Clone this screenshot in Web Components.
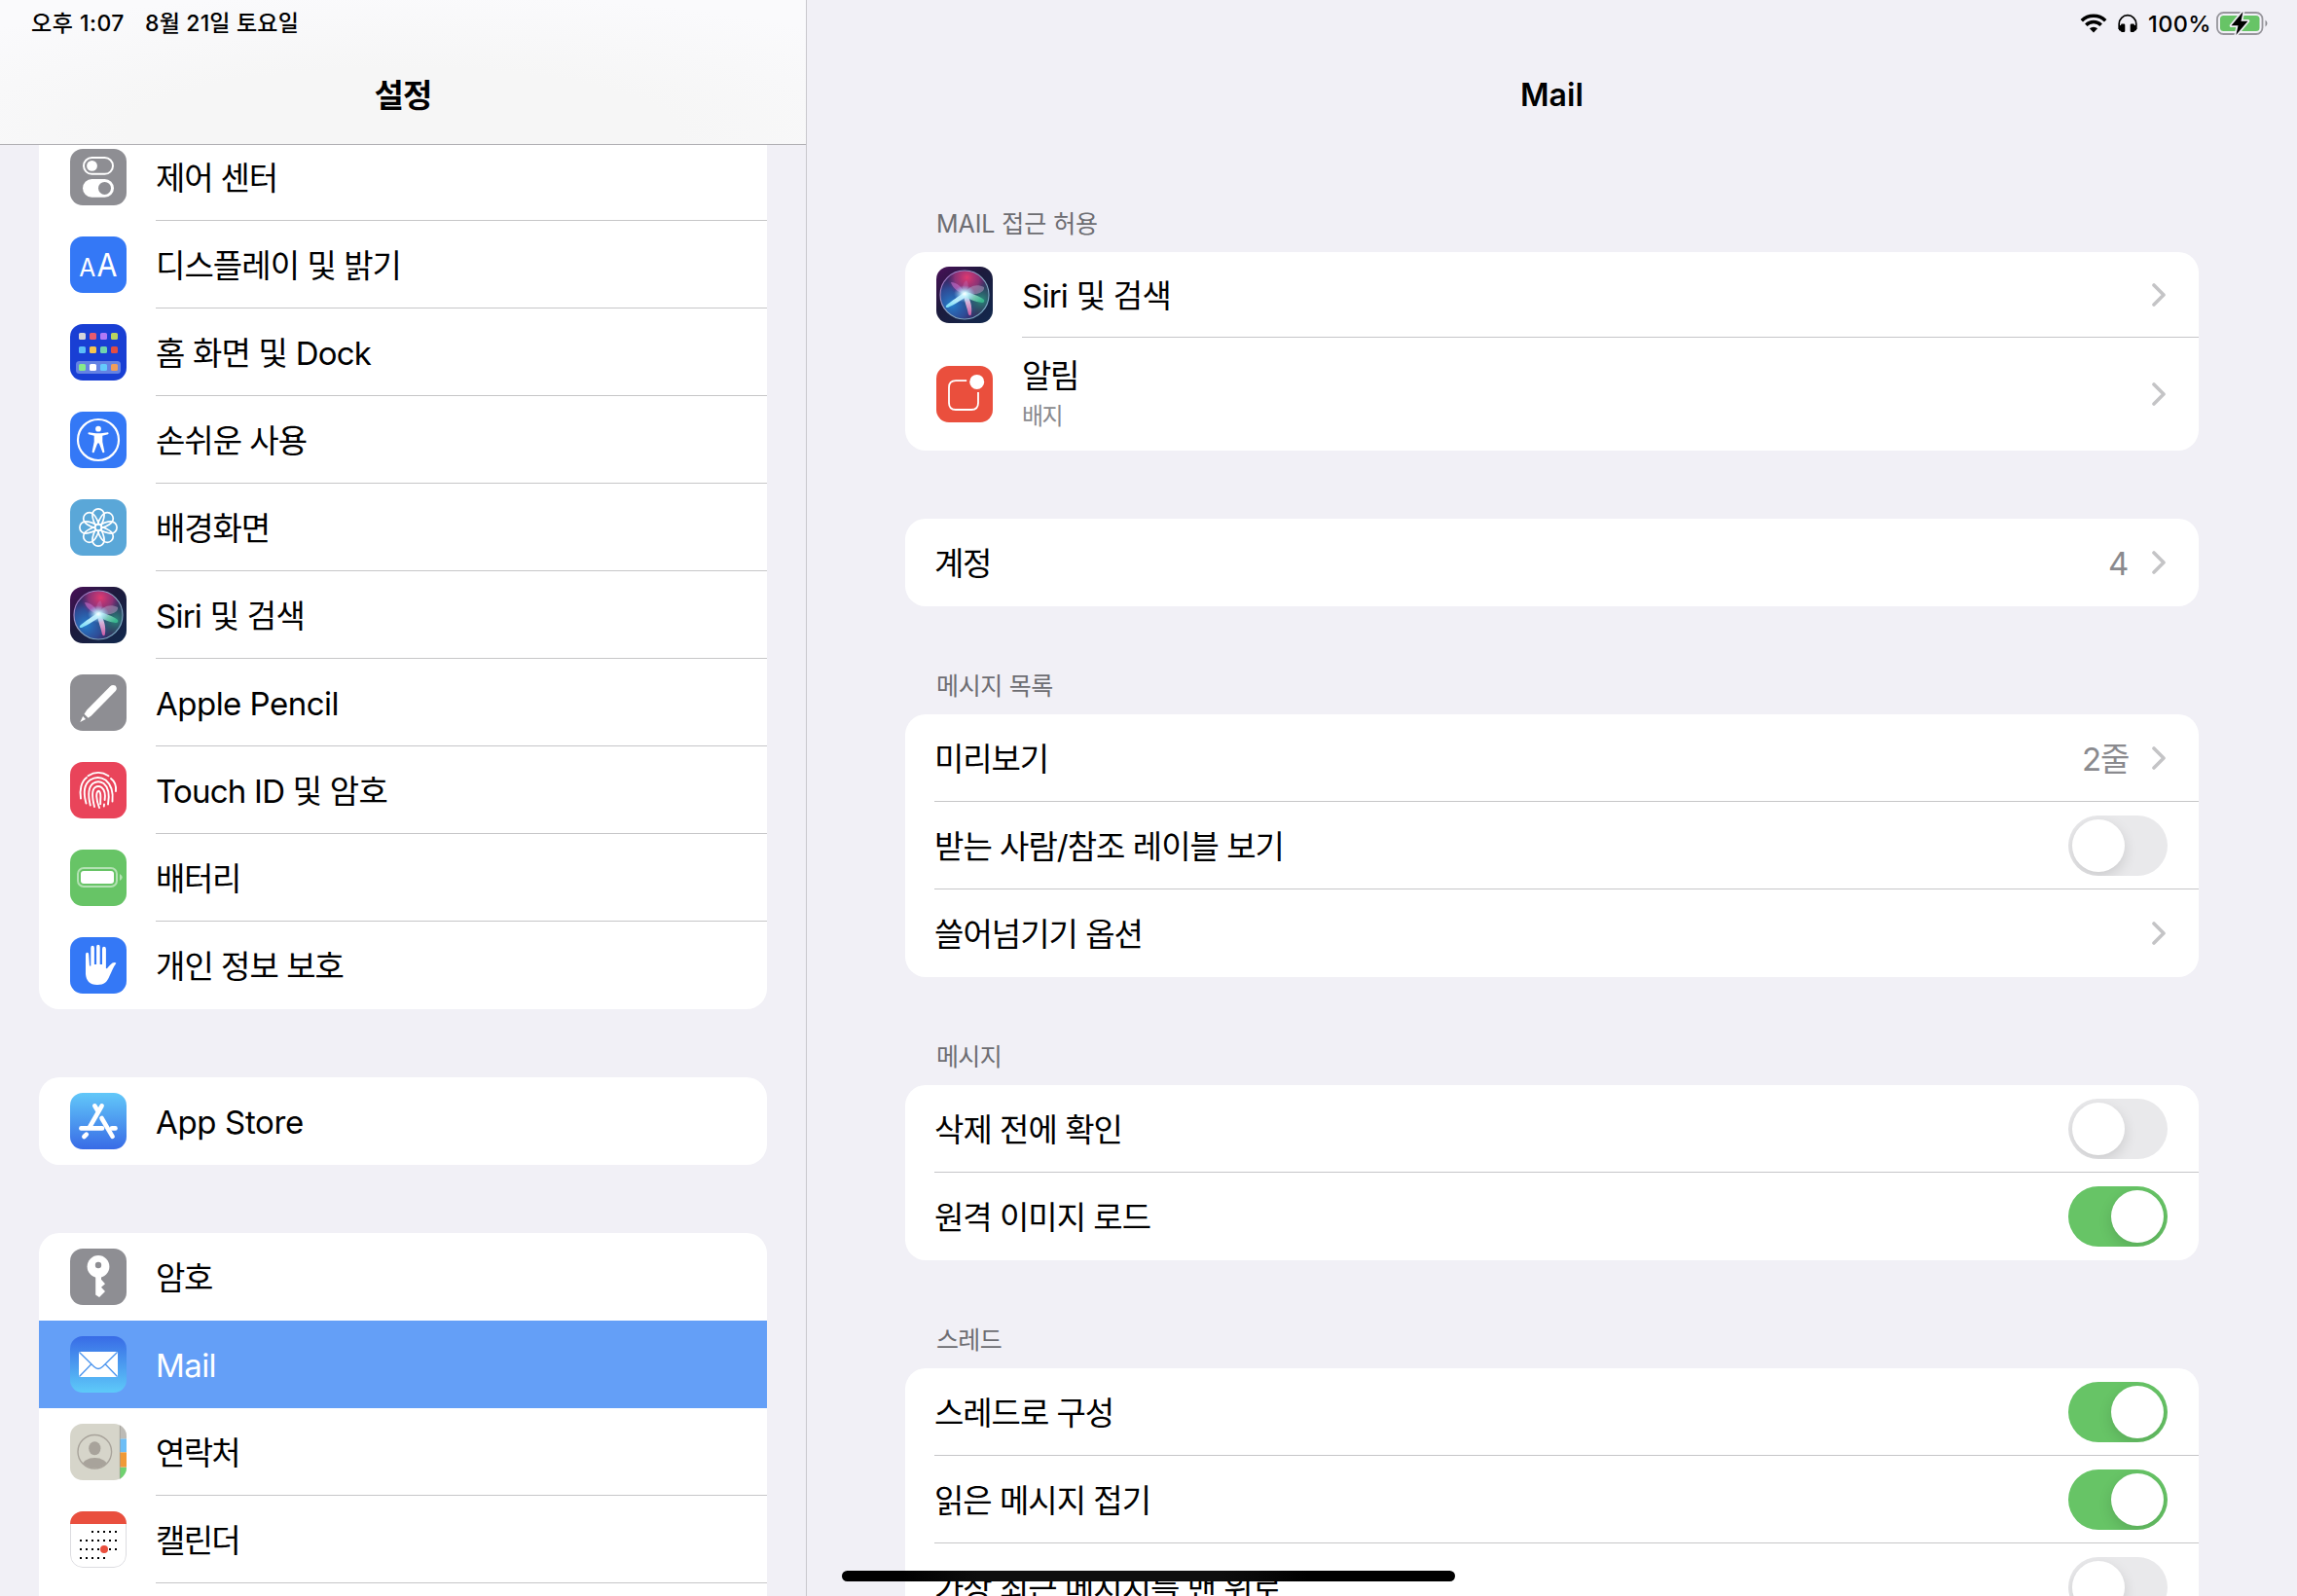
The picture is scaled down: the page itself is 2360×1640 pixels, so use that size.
<!DOCTYPE html>
<html lang="ko">
<head>
<meta charset="utf-8">
<title>설정</title>
<style>
html,body{margin:0;padding:0;width:2360px;height:1640px;overflow:hidden;background:#f1f0f6}
body{font-family:Inter,"Noto Sans CJK KR",sans-serif;color:#000}
</style>
</head>
<body>
<settings-app></settings-app>

<script>
const SIRI = `
<defs>
<linearGradient id="sb" x1="0" y1="0" x2=".9" y2="1"><stop offset="0" stop-color="#4a1058"/><stop offset=".45" stop-color="#1c1a3c"/><stop offset="1" stop-color="#12284c"/></linearGradient>
<linearGradient id="sr" x1="0" y1="0" x2="1" y2="1"><stop offset="0" stop-color="#a86ac8"/><stop offset=".5" stop-color="#8fa8c4"/><stop offset="1" stop-color="#6fa6c0"/></linearGradient>
<radialGradient id="sp" cx=".55" cy=".14" r=".42"><stop offset="0" stop-color="#e03a70"/><stop offset=".6" stop-color="#b0357f" stop-opacity=".7"/><stop offset="1" stop-color="#7a2a80" stop-opacity="0"/></radialGradient>
<radialGradient id="sl" cx=".24" cy=".7" r=".55"><stop offset="0" stop-color="#2480cc"/><stop offset=".6" stop-color="#2a5cae" stop-opacity=".7"/><stop offset="1" stop-color="#3047a0" stop-opacity="0"/></radialGradient>
<radialGradient id="sg" cx=".85" cy=".6" r=".42"><stop offset="0" stop-color="#2a8a7c"/><stop offset="1" stop-color="#20605f" stop-opacity="0"/></radialGradient>
<radialGradient id="sw"><stop offset="0" stop-color="#fff"/><stop offset=".3" stop-color="#c4f4ff" stop-opacity=".85"/><stop offset="1" stop-color="#7fd0ff" stop-opacity="0"/></radialGradient>
<linearGradient id="s1" x1="1" y1="0" x2="0" y2="1"><stop offset="0" stop-color="#fff"/><stop offset="1" stop-color="#74dcf6"/></linearGradient>
<linearGradient id="s2" x1="0" y1="0" x2="0" y2="1"><stop offset="0" stop-color="#e8f0ff"/><stop offset="1" stop-color="#d85ca8"/></linearGradient>
<linearGradient id="s3" x1="0" y1="0" x2="1" y2=".6"><stop offset="0" stop-color="#e8ffff"/><stop offset="1" stop-color="#3cc092"/></linearGradient>
</defs>
<rect width="58" height="58" fill="url(#sb)"/>
<circle cx="29" cy="29" r="24.8" fill="#38265f"/>
<circle cx="29" cy="29" r="24.8" fill="url(#sl)"/><circle cx="29" cy="29" r="24.8" fill="url(#sg)"/><circle cx="29" cy="29" r="24.8" fill="url(#sp)"/>
<circle cx="29" cy="29" r="25" fill="none" stroke="url(#sr)" stroke-width="1.2"/>
<path d="M28 28C22 26 16 21 15 16c6 0 12 5 14 12z" fill="#c870cc" opacity=".6"/>
<path d="M28 28C26 22 27 17 31 14c3 4 2 10-2 14z" fill="#c060a8" opacity=".5"/>
<path d="M29 28c4-8 12-11 20-7 1 5-7 9-20 7z" fill="#a890b8" opacity=".6"/>
<path d="M30 26C24 29 15 36 10 40q-1 2.500 2 2C18 39 27 34 33 29z" fill="url(#s1)"/>
<path d="M28 29c1 8 4 14 5 20q2.500 3 3-1C37 41 35 33 31 29z" fill="url(#s2)" opacity=".92"/>
<path d="M29 26c7 1 15 4 20 8q1 3-2 3C39 36 34 33 29 31z" fill="url(#s3)" opacity=".85"/>
<ellipse cx="29" cy="28" rx="11" ry="9" fill="url(#sw)"/>`;

const prints = `
<g fill="none" stroke="#fff" stroke-width="1.9" stroke-linecap="round">
<path d="M18.500 14.200Q29 7.600 39.500 14.200"/>
<path d="M11 37.500C9.500 29 11.500 20 17 16"/><path d="M42 17c4 3 5.500 8 5 13"/>
<path d="M16.500 42.500C13.500 32 14.500 23 20.500 18.500q8-5 16 0C42 23 44.500 31 43.500 40.500"/>
<path d="M20.800 44.500C18 33 18.500 26 23.500 22q5.500-3.500 11 0c5 4 6 13 4.500 21.500"/>
<path d="M25 46C22.500 36 22 29 25.500 26.200q3.500-2.400 7 0C36 29 36.300 34 35.600 39"/><path d="M35 43.500 34.800 45.500"/>
<path d="M30 47C26.500 38 26.500 31 29 29.800c2.700.2 2.500 6 2.200 9.500q0 3 0 4"/>
</g>`;

const sq = (x, y, c) => `<rect x="${x}" y="${y}" width="7" height="7" rx="1.600" fill="${c}"/>`;
const sqRow = (y, cs) => cs.map((c, i) => sq(9 + i * 11, y, c)).join('');
const dots = (y, from, n) => Array.from({length: n}, (_, i) => `<rect x="${10 + (from + i) * 6}" y="${y}" width="2" height="2"/>`).join('');
const petals = Array.from({length: 8}, (_, i) => `<path d="M29 32.500C26 27 22.900 22 22.900 16a6.100 6.100 0 0 1 12.200 0C35.100 22 32 27 29 32.500z" transform="rotate(${i * 45} 29 29)"/>`).join('');

const ICONS = {
control: `<rect width="58" height="58" fill="#8e8e93"/>
<rect x="14" y="9" width="30" height="16.800" rx="8.400" fill="none" stroke="#fff" stroke-width="2"/><circle cx="22.500" cy="17.400" r="5.400" fill="#fff"/>
<rect x="13" y="31" width="32" height="18.800" rx="9.400" fill="#fff"/><circle cx="35.500" cy="40.400" r="6.500" fill="#8e8e93"/>`,
display: `<rect width="58" height="58" fill="#3478f6"/><g fill="#fff" font-family="Inter,sans-serif" font-weight="400"><text x="9.300" y="41" font-size="26" textLength="17" lengthAdjust="spacingAndGlyphs">A</text><text x="27.600" y="41" font-size="33" textLength="21" lengthAdjust="spacingAndGlyphs">A</text></g>`,
home: `<rect width="58" height="58" fill="#193fd4"/>${sqRow(9, ['#d6d6da','#e85b6e','#af79f6','#b9d45d'])}${sqRow(23, ['#5cbdf8','#f6c54f','#70d4ad','#e24d43'])}<rect x="6" y="38" width="46" height="13" rx="3.500" fill="#6482e4"/>${sqRow(41, ['#86ea8b','#fff','#64cafc','#f09e5b'])}`,
access: `<rect width="58" height="58" fill="#3478f6"/><circle cx="29" cy="29" r="21" fill="none" stroke="#fff" stroke-width="2.200"/><circle cx="29" cy="17.700" r="2.900" fill="#fff"/><path d="M19 21.200 26.500 22.300h5L39 21.200q1.300.9 0 2L33.300 24.700V31L35.400 41.300q-.6 1.700-2 .6L29.800 32.500h-1.600L24.600 41.900q-1.400 1.100-2-.6L24.700 31V24.700L19 23.200q-1.300-1.100 0-2z" fill="#fff"/>`,
wallpaper: `<rect width="58" height="58" fill="#5aa7d8"/><g fill="none" stroke="#fff" stroke-width="1.700">${petals}<circle cx="29" cy="29" r="3.200" fill="#5aa7d8"/></g>`,
siri: SIRI,
pencil: `<rect width="58" height="58" fill="#8e8e93"/><path d="M41.200 12.200Q43.500 10 46.500 11.500 49 14.300 46.800 17L22 42.300 18.700 44.800 14.500 40.800 17.300 36.500z" fill="#fff"/><path d="M13.200 43 16 46 10.300 49z" fill="#fff"/>`,
touch: `<rect width="58" height="58" fill="#e9445a"/>${prints}`,
battery: `<rect width="58" height="58" fill="#67c466"/><rect x="8" y="19" width="40" height="19" rx="6" fill="none" stroke="#fff" stroke-width="2" opacity=".5"/><rect x="11" y="22" width="34" height="13" rx="3" fill="#fff"/><path d="M51 25q5.500 3.500 0 7z" fill="#fff" opacity=".5"/>`,
hand: `<rect width="58" height="58" fill="#3478f6"/><path d="M16 18q0-2.300 1.600-2.300T19.200 18L20 29.500h1.300V11q0-2.200 1.800-2.200T24.900 11V28h2.200V10q0-2.200 1.800-2.200T30.700 10V28h2.300V12q0-2.200 1.900-2.200T36.900 12V32l1 .3C40 30 41.500 27.800 43.500 26.500q2.500-1 3.900.2C44 31 43 35 40.500 40c-2.200 5.800-5.500 9-12.500 9-8 0-11.500-4.500-12-11z" fill="#fff"/>`,
appstore: `<defs><linearGradient id="ga" x2="0" y2="1"><stop stop-color="#62c8f9"/><stop offset="1" stop-color="#386be6"/></linearGradient></defs><rect width="58" height="58" fill="url(#ga)"/><g stroke="#fff" stroke-width="4.600" stroke-linecap="round" fill="none"><path d="M25.300 13.300 28 17.700"/><path d="M32.600 13.300 20.200 35"/><path d="M11.400 36.400H33"/><path d="M43 36.400h3.500"/><path d="M32.500 26 43.600 44.800"/><path d="M16.800 42.600 14.400 45"/></g>`,
key: `<rect width="58" height="58" fill="#8e8e93"/><circle cx="29" cy="18.500" r="11.400" fill="#fff"/><path d="M26.200 27V47.500L30 50 36 44 32 39.800 36 36.300 32 31.800V27z" fill="#fff"/><circle cx="29" cy="17" r="3.200" fill="#8e8e93"/>`,
mail: `<defs><linearGradient id="gm" x2="0" y2="1"><stop stop-color="#386be6"/><stop offset="1" stop-color="#5ecaf9"/></linearGradient></defs><rect width="58" height="58" fill="url(#gm)"/><rect x="9" y="16" width="40" height="26" rx="1.300" fill="#fff"/><path d="M9.500 16.500 24.500 31.300q4.500 4.400 9 0L48.500 16.500M9.500 41.500 21.600 29M48.500 41.500 36.400 29" fill="none" stroke="#4a94ee" stroke-width="1.300"/>`,
contacts: `<rect width="58" height="58" fill="#d6d5ca"/><rect x="51" width="7" height="15" fill="#bdbbb6"/><rect x="51" y="15.500" width="7" height="13.500" fill="#6dbef6"/><rect x="51" y="29.500" width="7" height="15" fill="#f09a37"/><rect x="51" y="45" width="7" height="13" fill="#70d270"/><path d="M51.300 0V58" stroke="#9c9a92" stroke-width=".7"/><defs><clipPath id="cc"><circle cx="25.300" cy="28.800" r="17"/></clipPath></defs><circle cx="25.300" cy="28.800" r="17.300" fill="none" stroke="#a8a39b" stroke-width="1.400"/><g clip-path="url(#cc)" fill="#a8a39b"><ellipse cx="25.300" cy="25.300" rx="6.100" ry="7"/><ellipse cx="25.300" cy="43.500" rx="13" ry="8.500"/></g>`,
calendar: `<rect x=".5" y=".5" width="57" height="57" rx="12.500" fill="#fff" stroke="#dcdce0"/><rect width="58" height="13" fill="#e94f3e"/><g fill="#000">${dots(20,2,5)}${dots(29,0,7)}${dots(38,0,7)}${dots(47,0,5)}</g><circle cx="35" cy="39" r="4" fill="#e94f3e"/>`,
notif: `<rect width="58" height="58" fill="#ea4f3d"/><path d="M31.200 15.200H20q-7 0-7 7V38q0 7 7 7H36q7 0 7-7V27" fill="none" stroke="#fff" stroke-width="1.800"/><circle cx="41.700" cy="16.400" r="7.500" fill="#fff"/>`
};

function define(name, html, setup) {
  const t = document.createElement('template');
  t.innerHTML = html;
  customElements.define(name, class extends HTMLElement {
    connectedCallback() {
      if (this.shadowRoot) return;
      this.attachShadow({mode: 'open'}).append(t.content.cloneNode(true));
      if (setup) setup(this, this.shadowRoot);
    }
  });
}

/* A single line of text whose tracking is tuned to a set advance width. */
define('fit-text', `<style>:host{display:block;white-space:nowrap;line-height:1;flex:none}span{display:inline-block}</style><span></span>`, (el, r) => {
  const s = r.querySelector('span');
  s.textContent = el.getAttribute('text');
  const w = +el.getAttribute('w');
  if (w) s.style.letterSpacing = ((w - s.getBoundingClientRect().width) / [...s.textContent].length).toFixed(3) + 'px';
});

define('app-icon', `<style>:host{display:block;width:58px;height:58px;border-radius:13px;overflow:hidden;flex:none}svg{display:block}</style><svg width="58" height="58" viewBox="0 0 58 58"></svg>`, (el, r) => {
  r.querySelector('svg').innerHTML = ICONS[el.getAttribute('name')];
});

define('chevron-mark', `<style>:host{display:block;width:14px;height:24px;flex:none}svg{display:block}</style><svg width="14" height="24" viewBox="0 0 14 24"><path d="M2 2 12 12 2 22" fill="none" stroke="#c4c4c6" stroke-width="3.600" stroke-linecap="round" stroke-linejoin="round"/></svg>`);

define('toggle-switch', `<style>
:host{display:flex;box-sizing:border-box;width:102px;height:62px;padding:4px;border-radius:31px;background:#e9e9eb;overflow:hidden;flex:none}
:host([on]){background:#67c466;justify-content:flex-end}
i{width:54px;height:54px;border-radius:50%;background:#fff;box-shadow:0 5px 14px rgba(0,0,0,.13)}
</style><i></i>`);

define('list-card', `<style>:host{display:flex;flex-direction:column;border-radius:21px;background:#fff;overflow:hidden;flex:none}:host([continued]){border-top-left-radius:0;border-top-right-radius:0}:host([cut]){border-bottom-left-radius:0;border-bottom-right-radius:0;padding-bottom:20px}</style><slot></slot>`);

define('list-row', `<style>
:host{display:flex;height:90px;padding-left:30px;flex:none;font-size:33px}
:host([h="88"]){height:88px}:host([h="116"]){height:116px}
:host([selected]){background:#649ff7;color:#fff}
app-icon{align-self:center;margin:0 30px 0 2px}
.body{flex:1;display:flex;align-items:center;box-sizing:border-box;border-bottom:1px solid #c6c6c8;padding-right:34px}
:host([plain]) .body,:host([selected]) .body{border-color:transparent}
.label{display:flex;flex-direction:column;gap:13px;flex:1;padding-top:3px}
:host([sub]) .label{padding-top:0}
.sub{font-size:24px;color:#8a8a8e}
.value{color:#8a8a8e;margin-right:24px;padding-top:3px}
toggle-switch{margin-right:-2px}
</style>`, (el, r) => {
  const a = n => el.getAttribute(n);
  const d = document.createElement('template');
  d.innerHTML = (a('icon') ? `<app-icon name="${a('icon')}"></app-icon>` : '') +
    `<div class="body"><div class="label"><fit-text text="${a('text')}" w="${a('w') || ''}"></fit-text>` +
    (a('sub') ? `<fit-text class="sub" text="${a('sub')}" w="41"></fit-text>` : '') + `</div>` +
    (a('value') ? `<fit-text class="value" text="${a('value')}" w="${a('vw')}"></fit-text>` : '') +
    (el.hasAttribute('more') ? '<chevron-mark></chevron-mark>' : '') +
    (a('switch') ? `<toggle-switch ${a('switch') === 'on' ? 'on' : ''}></toggle-switch>` : '') + '</div>';
  r.append(d.content);
});

define('group-title', `<style>:host{display:flex;box-sizing:border-box;height:111px;align-items:flex-end;padding:0 0 16px 32px;font-size:25px;color:#6d6d72;flex:none}</style><slot></slot>`);

define('status-icons', `<style>:host{display:flex;height:48px;flex:none;box-sizing:border-box;align-items:center;justify-content:flex-end;font-size:23.500px;font-weight:500;padding-right:29px}svg{display:block}fit-text{margin:0 5px 0 11px;padding-top:1px}</style>
<svg width="28" height="20" viewBox="0 0 28 20"><path d="M1.800 7.200a17.400 17.400 0 0 1 24.400 0M6.300 11.700a11 11 0 0 1 15.400 0" fill="none" stroke="#000" stroke-width="3.500"/><path d="M9.900 15.300a6 6 0 0 1 8.200 0L14 19.600z"/></svg>
<svg style="margin-left:11px" width="20" height="20" viewBox="0 0 20 20"><path d="M1.200 16V10.500a8.800 8.800 0 0 1 17.600 0V16" fill="none" stroke="#000" stroke-width="1.700"/><rect x="3" y="10.500" width="4.300" height="8.500" rx="1.200"/><rect x="12.700" y="10.500" width="4.300" height="8.500" rx="1.200"/><path d="M1 12v5l2 1v-6zM19 12v5l-2 1v-6z"/></svg>
<fit-text text="100%" w="65"></fit-text>
<svg width="54" height="26" viewBox="0 0 54 26"><rect x="1" y="2" width="46.500" height="22" rx="6.500" fill="none" stroke="#97969c" stroke-width="1.800"/><rect x="4" y="5" width="40.500" height="16" rx="3.500" fill="#67c466"/><path d="M50.500 9.500q4 3.500 0 7z" fill="#8b8b90"/><path d="M27.500 1 15.500 15.300h7L20.300 25 32.500 10.700H25.500z" fill="#000" stroke="#f1f0f6" stroke-width="3.500" stroke-linejoin="round" paint-order="stroke"/></svg>`);

define('side-bar', `<style>
:host{display:flex;flex-direction:column;width:828px;height:1640px;border-right:1px solid #c9c8cd;flex:none;overflow:hidden}
header{box-sizing:border-box;border-bottom:1px solid #b0afb3;background:radial-gradient(ellipse 75% 95% at 50% 90%,#f6f6f6 45%,#fafafc 100%);height:149px;flex:none;position:relative;z-index:1;display:flex;flex-direction:column}
.time{display:flex;gap:21px;height:48px;align-items:center;padding-left:32px;font-size:23px;font-weight:500}
.title{display:flex;justify-content:center;align-items:center;height:100px;font-size:33px;font-weight:600}
main{display:flex;flex-direction:column;gap:70px;margin:-12px 40px 0}
</style>
<header><div class="time"><fit-text text="오후 1:07" w="96"></fit-text><fit-text text="8월 21일 토요일" w="158"></fit-text></div><div class="title"><fit-text text="설정" w="59"></fit-text></div></header>
<main>
<list-card continued>
<list-row icon="control" text="제어 센터" w="125"></list-row>
<list-row icon="display" text="디스플레이 및 밝기" w="252"></list-row>
<list-row icon="home" text="홈 화면 및 Dock" w="221"></list-row>
<list-row icon="access" text="손쉬운 사용" w="155"></list-row>
<list-row icon="wallpaper" text="배경화면" w="117"></list-row>
<list-row icon="siri" text="Siri 및 검색" w="153"></list-row>
<list-row icon="pencil" text="Apple Pencil" w="188"></list-row>
<list-row icon="touch" text="Touch ID 및 암호" w="238"></list-row>
<list-row icon="battery" text="배터리" w="87"></list-row>
<list-row icon="hand" text="개인 정보 보호" w="193" plain></list-row>
</list-card>
<list-card><list-row icon="appstore" text="App Store" w="152" plain></list-row></list-card>
<list-card cut>
<list-row icon="key" text="암호" w="58" plain></list-row>
<list-row icon="mail" text="Mail" w="62" selected></list-row>
<list-row icon="contacts" text="연락처" w="86"></list-row>
<list-row icon="calendar" text="캘린더" w="86"></list-row>
</list-card>
</main>`);

define('detail-pane', `<style>
:host{display:flex;flex-direction:column;flex:1;height:1640px;overflow:hidden}
.title{display:flex;justify-content:center;align-items:center;height:100px;font-size:32px;font-weight:600;flex:none}
main{display:flex;flex-direction:column;margin:0 101px;flex:none}
list-card.gap{margin-top:70px}
</style>
<status-icons></status-icons>
<div class="title"><fit-text text="Mail" w="65"></fit-text></div>
<main>
<group-title><fit-text text="MAIL 접근 허용" w="166"></fit-text></group-title>
<list-card><list-row h="88" icon="siri" text="Siri 및 검색" w="153" more></list-row><list-row h="116" icon="notif" text="알림" sub="배지" w="58" more plain></list-row></list-card>
<list-card class="gap"><list-row text="계정" w="58" value="4" vw="21" more plain></list-row></list-card>
<group-title><fit-text text="메시지 목록" w="120"></fit-text></group-title>
<list-card><list-row text="미리보기" w="117" value="2줄" vw="48" more></list-row><list-row text="받는 사람/참조 레이블 보기" w="359" switch="off"></list-row><list-row text="쓸어넘기기 옵션" w="214" more plain></list-row></list-card>
<group-title><fit-text text="메시지" w="67"></fit-text></group-title>
<list-card><list-row text="삭제 전에 확인" w="193" switch="off"></list-row><list-row text="원격 이미지 로드" w="222" switch="on" plain></list-row></list-card>
<group-title><fit-text text="스레드" w="67"></fit-text></group-title>
<list-card><list-row text="스레드로 구성" w="184" switch="on"></list-row><list-row text="읽은 메시지 접기" w="222" switch="on"></list-row><list-row text="가장 최근 메시지를 맨 위로" w="356" switch="off"></list-row></list-card>
</main>`);

define('settings-app', `<style>
:host{display:flex;width:2360px;height:1640px;position:relative;overflow:hidden;background:#f1f0f6}
.home{position:absolute;left:865px;top:1614px;width:630px;height:11px;border-radius:6px;background:linear-gradient(90deg,#000 10%,#0d0d0d 22%,#0d0d0d 62%,#000 76%)}
</style><side-bar></side-bar><detail-pane></detail-pane><div class="home"></div>`);
</script>
</body>
</html>
